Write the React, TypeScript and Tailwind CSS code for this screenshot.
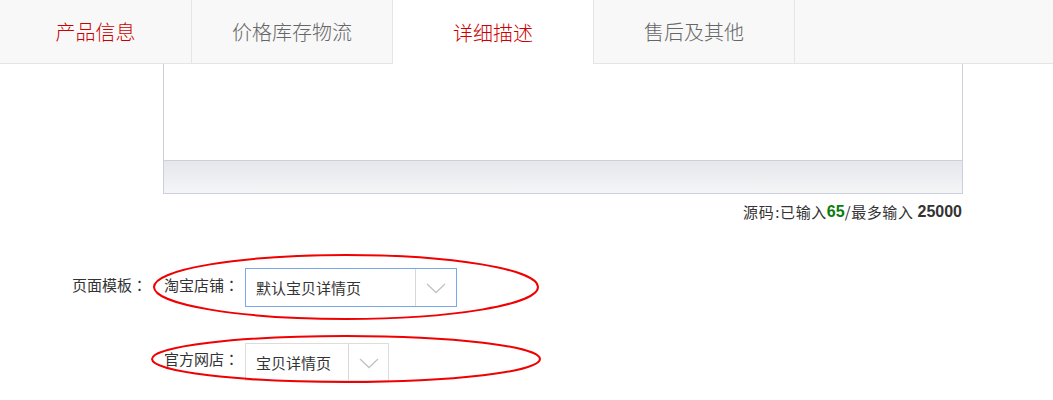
import React from "react";

const cjk = { fontFamily: '"Noto Sans CJK SC", "Liberation Sans", sans-serif' };
const num = { fontFamily: '"Liberation Sans", "Noto Sans CJK SC", sans-serif' };
const jp = { fontFamily: '"Noto Sans CJK JP", sans-serif' };

function Arrow() {
  return (
    <svg width="20" height="11" viewBox="0 0 20 11" fill="none">
      <path d="M1 1 L10 9.5 L19 1" stroke="#c2c2c2" strokeWidth="1.3" />
    </svg>
  );
}

function Colon() {
  return <span style={jp}>：</span>;
}

export default function App() {
  const tabs = [
    { label: "产品信息", w: "w-[192px]", cls: "bg-[#f8f8f8] text-[#cc0000] border-r border-b border-[#e5e5e5]" },
    { label: "价格库存物流", w: "w-[201px]", cls: "bg-[#f8f8f8] text-[#666] border-r border-b border-[#e5e5e5]" },
    { label: "详细描述", w: "w-[200px]", cls: "bg-white text-[#cc0000]" },
    { label: "售后及其他", w: "w-[202px]", cls: "bg-[#f8f8f8] text-[#666] border-l border-r border-b border-[#e5e5e5]" },
  ];
  return (
    <div className="w-[1053px] h-[400px] bg-white relative overflow-hidden" style={cjk}>
      <div className="flex h-[64px]">
        {tabs.map((t) => (
          <div key={t.label} className={`${t.w} ${t.cls} flex items-center justify-center text-[20px] font-light pt-[1px]`}>
            {t.label}
          </div>
        ))}
        <div className="flex-1 bg-[#f8f8f8] border-b border-[#e5e5e5]" />
      </div>

      <div className="ml-[163px] w-[800px]">
        <div className="h-[96px] border-l border-r border-[#ccd0dc] bg-white" />
        <div className="h-[34px] border border-[#ccd0dc] bg-gradient-to-b from-[#e6e7eb] to-[#f3f5f7]" />
        <div className="flex justify-end items-center h-[36px] text-[15px] text-[#333] pr-[1px] tracking-[0.6px]">
          <span>源码<span className="pl-[1px]">:</span>已输入</span>
          <span className="font-bold text-[#0a7d0a] text-[16px] tracking-normal" style={num}>65</span>
          <span>/最多输入&nbsp;</span>
          <span className="font-bold text-[16px] tracking-normal" style={num}>25000</span>
        </div>
      </div>

      <div className="mt-[38px] flex items-center h-[39px] text-[15px] text-[#333]">
        <div className="w-[164px] pl-[72px] pb-[5px]">页面模板<Colon /></div>
        <div className="w-[81px] pb-[5px]">淘宝店铺<Colon /></div>
        <div className="flex w-[212px] h-[39px] border border-[#7aa7e8] bg-white">
          <div className="flex-1 flex items-center pl-[10px] pt-[2px]">默认宝贝详情页</div>
          <div className="w-[41px] border-l border-[#d8d8d8] flex items-center justify-center pt-[2px]">
            <Arrow />
          </div>
        </div>
      </div>

      <div className="mt-[36px] flex items-center h-[38px] text-[15px] text-[#333]">
        <div className="w-[164px]" />
        <div className="w-[81px] pb-[5px]">官方网店<Colon /></div>
        <div className="flex w-[144px] h-[38px] border border-[#dddddd] bg-white">
          <div className="flex-1 flex items-center pl-[10px] pt-[3px]">宝贝详情页</div>
          <div className="w-[40px] border-l border-[#d8d8d8] flex items-center justify-center pt-[2px]">
            <Arrow />
          </div>
        </div>
      </div>

      <svg className="absolute left-0 top-0 pointer-events-none" width="1053" height="400">
        <ellipse cx="346" cy="287" rx="192" ry="32" fill="none" stroke="#f00000" strokeWidth="2" />
        <ellipse cx="346" cy="359" rx="194" ry="23" fill="none" stroke="#f00000" strokeWidth="2" />
      </svg>
    </div>
  );
}
